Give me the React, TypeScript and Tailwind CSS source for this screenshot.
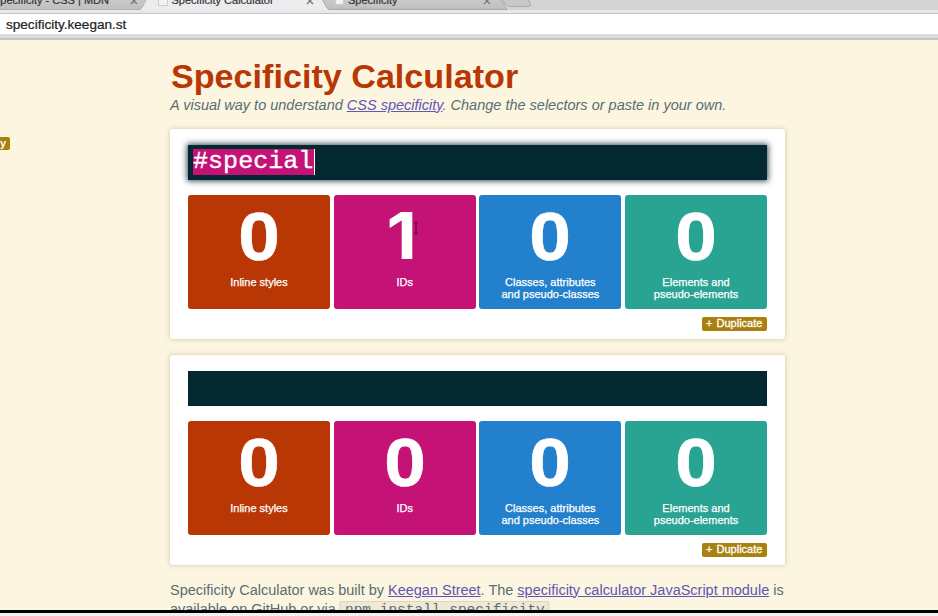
import React from "react";

const tiles = [
  { color: "bg-[#b93605]", label: ["Inline styles"] },
  { color: "bg-[#c51277]", label: ["IDs"] },
  { color: "bg-[#2380cc]", label: ["Classes, attributes", "and pseudo-classes"] },
  { color: "bg-[#2aa492]", label: ["Elements and", "pseudo-elements"] },
];

function Close({ className }: { className: string }) {
  return (
    <svg className={`absolute top-[-3px] h-[8px] w-[8px] ${className}`} viewBox="0 0 8 8" stroke="#777" strokeWidth="1.3">
      <path d="M1 1l6 6M7 1L1 7" />
    </svg>
  );
}

function TabBar() {
  return (
    <header className="relative h-[13px] shrink-0 overflow-hidden bg-[#d4d4d6] text-[11px] leading-[13px] text-[#333] [-webkit-text-stroke:0.2px_#333]">
      <svg className="absolute inset-0" width="938" height="13" viewBox="0 0 938 13">
        <defs>
          <linearGradient id="tab" x1="0" y1="0" x2="0" y2="1">
            <stop offset="0" stopColor="#cacaca" />
            <stop offset="1" stopColor="#bfbfc0" />
          </linearGradient>
        </defs>
        <path d="M0-1H147L143 7Q141 10 137 10H0Z" fill="url(#tab)" stroke="#a9a9aa" />
        <path d="M147-1L143 7Q141 10 137 11V13H332L327 8L322-1Z" fill="#ececee" />
        <path d="M322-1L326 6Q327 9.500 330 9.500H507L500-1Z" fill="url(#tab)" stroke="#a9a9aa" />
        <path d="M502-1L505 4Q507 6.500 511 6.500H528Q532 6 530 3L528-1Z" fill="#c8c8c9" stroke="#aaa" />
        <path d="M0 11.500H938" stroke="#e8e8ea" strokeWidth="3" />
        <path d="M158.500-1V5.500H167.500V-1M335.500-1V4.500H343.500V-1" fill="#f2f2f2" stroke="#ccc" />
      </svg>
      <span className="absolute left-[-7px] top-[-6px] whitespace-nowrap">Specificity - CSS | MDN</span>
      <span className="absolute left-[171.5px] top-[-6px] whitespace-nowrap">Specificity Calculator</span>
      <span className="absolute left-[348px] top-[-6px] whitespace-nowrap">Specificity</span>
      <Close className="left-[130px]" />
      <Close className="left-[306px]" />
      <Close className="left-[483px]" />
    </header>
  );
}

function Card({ selector, ids }: { selector: string; ids: string }) {
  return (
    <section className="h-[210px] w-[615px] rounded-[3px] bg-white px-[18px] pt-[16.5px] shadow-[0_0_5px_rgba(90,75,20,0.28)]">
      <div
        className={`flex h-[34.500px] items-center bg-[#04282f] pl-[5px] ${selector ? "shadow-[0_0_6px_1px_rgba(0,28,36,0.8)]" : ""}`}
      >
        {selector && (
          <span className="h-[26px] w-[122px] whitespace-nowrap border-r border-white bg-[#c51277] font-['Liberation_Mono',monospace] text-[23px] leading-[26px] text-white [-webkit-text-stroke:0.3px_white]">
            <span className="inline-block origin-left scale-x-[1.09]">{selector}</span>
          </span>
        )}
      </div>
      <div className="mt-[15.500px] grid grid-cols-4 gap-[3.670px]">
        {tiles.map((tile, i) => (
          <div key={i} className={`relative h-[114px] rounded-[3px] pt-[7px] text-center text-white ${tile.color}`}>
            {i === 1 && ids === "1" ? (
              <div className="h-[68px] scale-x-[1.1] pr-[6px] font-['Inter',sans-serif] text-[64px] font-bold leading-[68px]">{ids}</div>
            ) : (
              <div className="h-[68px] scale-x-[1.1] text-[68px] font-bold leading-[68px] [-webkit-text-stroke:0.6px_white]">0</div>
            )}
            <div className="mt-[6px] text-[11px] leading-[12px] [-webkit-text-stroke:0.25px_white]">
              {tile.label.map((line) => (
                <div key={line}>{line}</div>
              ))}
            </div>
            {i === 1 && ids === "1" && (
              <svg className="absolute left-[79px] top-[26px]" width="6" height="14" viewBox="0 0 6 14" fill="none" stroke="#4a1435">
                <path d="M1 1Q3 1 3 3V11Q3 13 1 13M5 1Q3 1 3 3M3 11Q3 13 5 13M2 9H4" />
              </svg>
            )}
          </div>
        ))}
      </div>
      <div className="mt-2 flex justify-end">
        <button className="flex h-[13.500px] w-[65.500px] items-center justify-center gap-1 rounded-[2px] bg-[#aa810f] text-[11px] leading-[13px] text-white [-webkit-text-stroke:0.3px_white]">
          <span>+</span>
          <span>Duplicate</span>
        </button>
      </div>
    </section>
  );
}

export default function App() {
  return (
    <div className="flex h-[616px] w-[938px] flex-col overflow-hidden bg-[#fcf5df] font-['Liberation_Sans',Arial,sans-serif]">
      <TabBar />
      <div className="flex h-[27px] shrink-0 items-start border-b-2 border-t border-b-[#c5c5c7] border-t-[#c4c4c8] bg-white shadow-[inset_0_-4px_0_#dcdce0]">
        <span className="ml-[6px] mt-[3px] origin-left scale-x-[1.043] text-[13px] leading-[15px] text-[#222] [-webkit-text-stroke:0.2px_#222]">specificity.keegan.st</span>
      </div>
      <div className="relative flex h-[570px] shrink-0 flex-col overflow-hidden pl-[170px]">
        <span className="absolute left-0 top-[97px] flex h-[13px] w-[10px] justify-end overflow-hidden rounded-r-[2px] bg-[#aa810f] pr-1 text-[11px] font-bold leading-[12px] text-white">y</span>
        <h1 className="mt-[17.5px] h-[37px] shrink-0 whitespace-nowrap pl-px text-[34px] font-bold leading-[37px] text-[#b93605]">
          <span className="inline-block origin-left scale-x-[1.004]">Specificity Calculator</span>
        </h1>
        <p className="h-[34px] w-max shrink-0 origin-left scale-x-[1.036] whitespace-nowrap text-[14px] italic leading-[21px] text-[#586e75]">
          A visual way to understand <a className="text-[#6056b8] underline">CSS specificity</a>. Change the selectors or paste in your own.
        </p>
        <div className="flex shrink-0 flex-col gap-4">
          <Card selector="#special" ids="1" />
          <Card selector="" ids="0" />
        </div>
        <div className="mt-[16px] w-max shrink-0 origin-left scale-x-[1.034] whitespace-nowrap text-[14px] leading-[19px] text-[#586e75]">
          <p>
            Specificity Calculator was built by <a className="text-[#6056b8] underline">Keegan Street</a>. The{" "}
            <a className="text-[#6056b8] underline">specificity calculator JavaScript module</a> is
          </p>
          <p>
            available on GitHub or via{" "}
            <code className="rounded-[2px] border border-[#ddd6c1] bg-[#eee8d5] px-1 font-['Liberation_Mono',monospace] text-[14px]">npm install specificity</code>
          </p>
        </div>
      </div>
      <div className="h-[3px] shrink-0 bg-black" />
      <div className="h-[3px] shrink-0 bg-[#f1f1f1]" />
    </div>
  );
}
